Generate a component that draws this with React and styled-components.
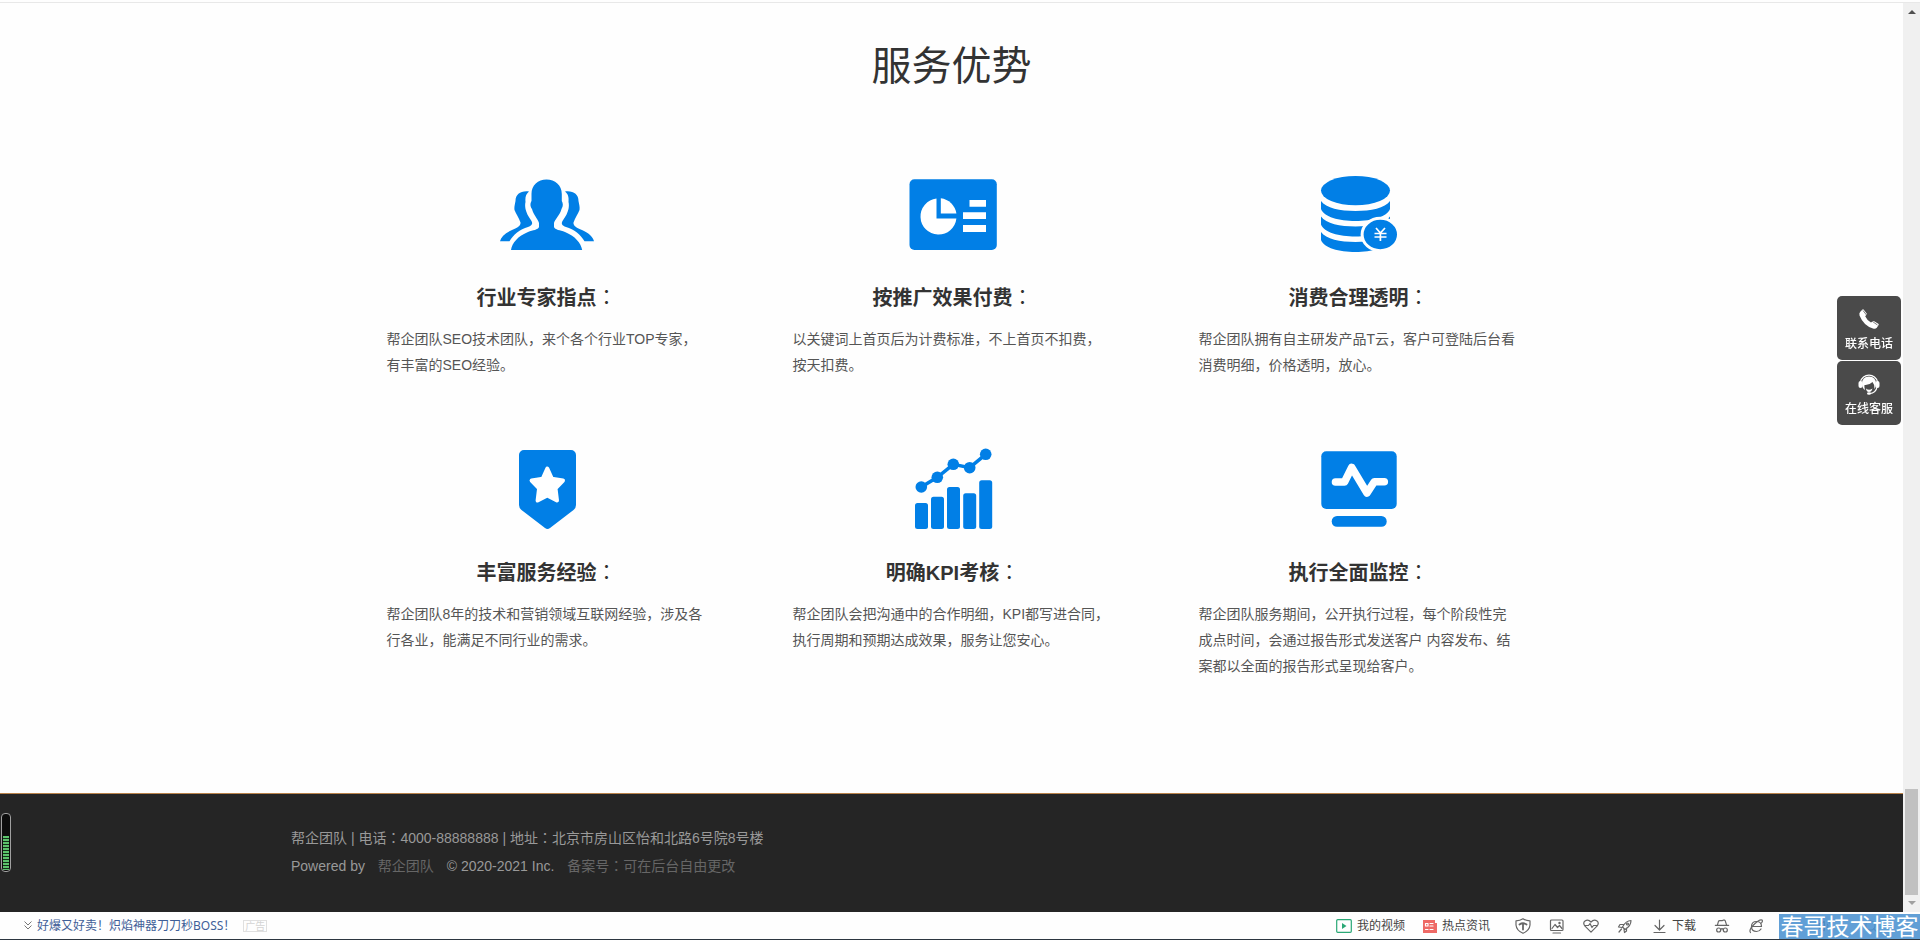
import React from 'react';
import styled, { createGlobalStyle } from 'styled-components';
import { Volume2, Search, HatGlasses } from 'lucide-react';

const BLUE = '#017fe6';

const GlobalStyle = createGlobalStyle`
  * { box-sizing: border-box; }
  body {
    margin: 0;
    background: #fefefe;
    color: #333;
    font-family: "Liberation Sans", "Noto Sans CJK SC", sans-serif;
    font-size: 14px;
  }
  h2, h3, p { margin: 0; }
  a { text-decoration: none; }
`;

const Shell = styled.div`
  display: flex;
  flex-direction: column;
  min-height: 100vh;
`;

const Viewport = styled.div`
  display: flex;
  flex: 1;
  margin-top: 2px;
  border-top: 1px solid #e8e8e8;
`;

const Page = styled.main`
  display: flex;
  flex: 1;
  flex-direction: column;
`;

const Advantages = styled.section`
  flex: 1;
  padding: 41px 20px 112px;
`;

const SectionTitle = styled.h2`
  margin-bottom: 76px;
  font-size: 40px;
  font-weight: 400;
  line-height: 44px;
  text-align: center;
`;

const CardGrid = styled.div`
  display: grid;
  grid-template-columns: repeat(3, 1fr);
  row-gap: 61px;
  max-width: 1218px;
  margin: 0 auto;
`;

const Card = styled.article`
  padding: 0 42px 0 44px;
`;

const CardIcon = styled.svg`
  display: block;
  width: 100px;
  height: 100px;
  margin: 0 auto 20px;
  fill: ${BLUE};
`;

const CardTitle = styled.h3`
  margin-bottom: 14px;
  font-size: 20px;
  font-weight: 700;
  line-height: 28px;
  text-align: center;
`;

// full-width colon sits in the middle of its cell
const Colon = styled.span`
  font-family: "Noto Sans CJK JP", sans-serif;
  font-weight: 400;
  line-height: 1;
`;

const CardText = styled.p`
  color: #555;
  line-height: 26px;
`;

const Footer = styled.footer`
  padding: 30px 20px 32px;
  border-top: 1px solid #b9824a;
  background: #252525;
  color: #999;
`;

const FooterInner = styled.div`
  max-width: 1321px;
  margin: 0 auto;
  line-height: 28px;
`;

const FooterLink = styled.a`
  margin: 0 9px;
  color: #666;
`;

const ScrollTrack = styled.div`
  display: flex;
  flex-direction: column;
  align-items: center;
  width: 17px;
  padding: 7px 0 7px;
  background: #f0f0f0;
`;

const ScrollThumb = styled.div`
  width: 13px;
  height: 106px;
  margin-top: auto;
  margin-bottom: 6px;
  background: #c1c1c1;
`;

const Arrow = styled.svg`
  width: 8px;
  height: 4px;
  fill: ${p => p.$color};
`;

const SideBar = styled.aside`
  position: fixed;
  top: 296px;
  right: 19px;
  display: flex;
  flex-direction: column;
  gap: 1px;
`;

const SideButton = styled.button`
  display: flex;
  flex-direction: column;
  align-items: center;
  gap: 4px;
  width: 64px;
  height: 64px;
  padding: 12px 0 0;
  border: 0;
  border-radius: 5px;
  background: #4a4a4a;
  color: #fff;
  font: 500 12px/18px "Noto Sans CJK SC", sans-serif;

  svg {
    width: 22px;
    height: 22px;
  }
`;

const Gauge = styled.div`
  position: fixed;
  left: 1px;
  bottom: 68px;
  display: flex;
  align-items: flex-end;
  width: 10px;
  height: 59px;
  padding: 1px;
  border: 1px solid #a0a0a0;
  border-radius: 4px;
  background: #0c0c0c;
`;

const GaugeFill = styled.div`
  width: 100%;
  height: 34px;
  background: repeating-linear-gradient(#5cc46c 0 2px, #14301a 2px 3px);
`;

const StatusBar = styled.div`
  position: relative;
  display: flex;
  align-items: center;
  height: 28px;
  padding-left: 24px;
  border-bottom: 1px solid #2c3640;
  background: #fefefe;
  font: 12px/18px "Noto Sans", "Noto Sans CJK SC", sans-serif;
`;

const News = styled.a`
  display: flex;
  align-items: center;
  gap: 5px;
  color: #3f5f98;
`;

const AdTag = styled.span`
  margin-left: 8px;
  padding: 0 1px;
  border: 1px solid #e0e0e0;
  color: #d4d4d4;
  font-size: 10px;
  line-height: 10px;
`;

const Tools = styled.div`
  display: flex;
  align-items: center;
  gap: 18px;
  margin-left: ${p => (p.$first ? 'auto' : '25px')};
`;

const Tool = styled.button`
  display: flex;
  align-items: center;
  gap: 5px;
  padding: 0;
  border: 0;
  background: none;
  color: #444;
  font: inherit;
`;

const ToolIcon = styled.svg`
  width: ${p => p.$w || 16}px;
  height: 16px;
  fill: none;
  stroke: #666;
  stroke-width: 1.2;
  stroke-linecap: round;
  stroke-linejoin: round;
`;

const ZoomInfo = styled.div`
  display: flex;
  align-items: center;
  gap: 32px;
  width: 156px;
  padding-left: 54px;
  color: #444;
`;

const Watermark = styled.div`
  position: absolute;
  right: 0;
  bottom: 0;
  width: 141px;
  height: 25px;
  background: rgba(80, 149, 209, 0.9);
  color: #fff;
  font-size: 23px;
  line-height: 25px;
  text-align: center;
`;

const ExpertsIcon = () => (
  <CardIcon viewBox="0 0 100 100">
    <path d="M49.5 15.5C58 15.5 64.8 21 64.8 30V37C66 39 66.5 42 64.5 45C63 51 58 55 57 59V63C58 66 63 66 68 68C78 72 84 79 85.2 86H14C15 79 21 72 31 68C36 66 41 66 42 63V59C41 55 36.5 51 35 45C32.8 42 33.3 39 34.5 37V30C34.5 21 41 15.5 49.5 15.5Z" />
    <path id="mate" d="M32 27.500C24 26.500 18.500 30 18.500 37C18 40 17 43 17.500 46C19 50 22 54 23.500 58.500C24 62 20 64 15 66C8 69 4 73 3 77.300H12.500C16 71 23 65 31 63C35 61.500 36 60 34.500 57C31 52 29.500 49 28.500 45C28 42 28 40 28.500 38C28 33 29 30 32 27.500Z" />
    <use href="#mate" transform="translate(100 0) scale(-1 1)" />
  </CardIcon>
);

const ReportIcon = () => (
  <CardIcon viewBox="0 0 100 100">
    <rect x="6.5" y="15.3" width="87.3" height="70.7" rx="5" />
    <g fill="#fff">
      <path d="M33.5 34.6A18 18 0 1 0 53.4 54.5H33.5Z" />
      <path d="M37.8 34.2A18 18 0 0 1 53.4 49.5H37.8Z" />
      <path d="M66.5 36H83V42.7H66.5ZM60 48.3H83V55H60ZM60 61H83V68H60Z" />
    </g>
  </CardIcon>
);

const CoinsIcon = () => (
  <CardIcon viewBox="0 0 100 100">
    <ellipse cx="46.5" cy="26.6" rx="34.5" ry="14.7" />
    {[0, 15.5, 31].map(dy => (
      <path
        key={dy}
        transform={`translate(0 ${dy})`}
        d="M12 37C17 44 31 47 46.5 47S76 44 81 37V45C78 53 63 57 46.5 57S15 53 12 45Z"
      />
    ))}
    <path d="M74 64H90V98H74Z" fill="#fefefe" />
    <ellipse cx="71.3" cy="70.5" rx="18.2" ry="16.2" stroke="#fefefe" strokeWidth="3" />
    <path d="M67 64L71.4 69L76 64M71.4 69V77M65.5 69.5H77.5M65.5 73H77.5" fill="none" stroke="#fff" strokeWidth="1.7" />
  </CardIcon>
);

const BadgeIcon = () => (
  <CardIcon viewBox="0 0 100 100">
    <path d="M27 11H74A5 5 0 0 1 79 16V66Q79 69 76.5 71L53 89Q50.5 91 48 89L24.5 71Q22 69 22 66V16A5 5 0 0 1 27 11Z" />
    <path
      d="M50.3 29.5L54.8 39.6L66 41.5L58.500 49.300L60 61.5L50.3 56.500L40.6 61.5L42.100 49.300L34.6 41.5L45.8 39.6Z"
      fill="#fff"
      stroke="#fff"
      strokeWidth="4"
      strokeLinejoin="round"
    />
  </CardIcon>
);

const ChartIcon = () => (
  <CardIcon viewBox="0 0 100 100">
    <rect x="12" y="64" width="13" height="26" rx="2.5" />
    <rect x="28" y="57.7" width="13" height="32.3" rx="2.5" />
    <rect x="44" y="48" width="13" height="42" rx="2.5" />
    <rect x="60.2" y="54.3" width="13" height="35.7" rx="2.5" />
    <rect x="76.2" y="41.3" width="13" height="48.7" rx="2.5" />
    <path d="M18.3 48L34.3 38.3L50.3 25.3L66.7 28.7L82.7 15.3" fill="none" stroke={BLUE} strokeWidth="3.5" />
    <circle cx="18.3" cy="48" r="5.8" />
    <circle cx="34.3" cy="38.3" r="5.8" />
    <circle cx="50.3" cy="25.3" r="5.8" />
    <circle cx="66.7" cy="28.7" r="5.8" />
    <circle cx="82.7" cy="15.3" r="5.8" />
  </CardIcon>
);

const MonitorIcon = () => (
  <CardIcon viewBox="0 0 100 100">
    <rect x="12.3" y="12.3" width="75.4" height="57.7" rx="5" />
    <rect x="22.7" y="77" width="55" height="10.7" rx="5.3" />
    <path
      d="M26.5 43H35.5L42.7 28.5L58 54L65.3 42.7H75.3"
      fill="none"
      stroke="#fff"
      strokeWidth="7.6"
      strokeLinecap="round"
      strokeLinejoin="round"
    />
  </CardIcon>
);

const cards = [
  { title: '行业专家指点', Icon: ExpertsIcon, text: '帮企团队SEO技术团队，来个各个行业TOP专家，有丰富的SEO经验。' },
  { title: '按推广效果付费', Icon: ReportIcon, text: '以关键词上首页后为计费标准，不上首页不扣费，按天扣费。' },
  { title: '消费合理透明', Icon: CoinsIcon, text: '帮企团队拥有自主研发产品T云，客户可登陆后台看消费明细，价格透明，放心。' },
  { title: '丰富服务经验', Icon: BadgeIcon, text: '帮企团队8年的技术和营销领域互联网经验，涉及各行各业，能满足不同行业的需求。' },
  { title: '明确KPI考核', Icon: ChartIcon, text: '帮企团队会把沟通中的合作明细，KPI都写进合同，执行周期和预期达成效果，服务让您安心。' },
  { title: '执行全面监控', Icon: MonitorIcon, text: '帮企团队服务期间，公开执行过程，每个阶段性完成点时间，会通过报告形式发送客户 内容发布、结案都以全面的报告形式呈现给客户。' },
];

function SideTools() {
  return (
    <SideBar>
      <SideButton>
        <svg viewBox="0 0 22 22" fill="#fff">
          <path d="M2.5 3.5L4.5 1.5Q5.2 1 5.8 1.7L8.7 5.5Q9.1 6.2 8.5 6.8L7.2 8.2Q8.7 11.8 13 14.5L14.8 13.2Q15.5 12.7 16.2 13.2L20.3 15.7Q21.2 16.3 20.6 17.1L18.8 19.8Q17.5 21.3 15 20.6Q5.5 17.5 1.5 7.5Q.8 5 2.5 3.5Z" />
          <path d="M5 2.500L8.500 7M14.500 13.500L19.500 17" stroke="#4a4a4a" strokeWidth=".7" />
        </svg>
        联系电话
      </SideButton>
      <SideButton>
        <svg viewBox="0 0 22 22" fill="#fff">
          <path d="M2.5 9A8.7 8.7 0 0 1 19.5 9" fill="none" stroke="#fff" strokeWidth="1.3" />
          <rect x="0.5" y="8" width="4" height="7" rx="2" />
          <rect x="17.5" y="8" width="4" height="7" rx="2" />
          <path d="M4 11Q4 3.5 11 3.5T18 11Q18 14 16.5 16Q17 12 14.5 9Q11 12.5 6.5 12Q6 14 7 17Q4 15 4 11Z" />
          <path d="M8 15.5Q11 18 14.5 15.5Q13.5 19 11 19T8 15.5Z" />
          <path d="M19 14Q18 20 11.5 20.7" fill="none" stroke="#fff" strokeWidth="1.3" />
          <ellipse cx="11" cy="20.5" rx="2" ry="1.2" />
        </svg>
        在线客服
      </SideButton>
    </SideBar>
  );
}

function BrowserBar() {
  return (
    <StatusBar>
      <News href="#">
        <svg width="8" height="9" viewBox="0 0 8 9" fill="none" stroke="#777">
          <path d="M.5 .5L4 4L7.5 .5M.5 4.5L4 8L7.5 4.5" />
        </svg>
        好爆又好卖！炽焰神器刀刀秒BOSS！
      </News>
      <AdTag>广告</AdTag>
      <Tools $first>
        <Tool>
          <ToolIcon viewBox="0 0 16 16">
            <rect x=".7" y="1.7" width="14.6" height="12.6" rx="1" stroke="#2aa876" />
            <path d="M6 5V11L10.5 8Z" fill="#2aa876" stroke="none" />
          </ToolIcon>
          我的视频
        </Tool>
        <Tool>
          <ToolIcon $w={14} viewBox="0 0 14 16">
            <path d="M0 2H12V5H14V15H0Z" fill="#ee6a66" stroke="none" />
            <path d="M2.500 5.500H5V8H2.500ZM7 5.500H10M7 8H10M2.500 11.500H5M7 11.500H10" stroke="#fff" />
          </ToolIcon>
          热点资讯
        </Tool>
      </Tools>
      <Tools>
        <Tool aria-label="安全">
          <ToolIcon viewBox="0 0 16 16">
            <path d="M8 .8Q11 2.8 15 2.8V7Q14.5 12.5 8 15.3Q1.5 12.5 1 7V2.8Q5 2.8 8 .8Z" />
            <path d="M4.5 6.5Q8 4 11.5 6.5M8 6V11.5" strokeWidth="1.8" />
          </ToolIcon>
        </Tool>
        <Tool aria-label="图片">
          <ToolIcon viewBox="0 0 16 16">
            <rect x="1.5" y="2" width="12.5" height="10.5" rx="1" />
            <path d="M3 10.5L6 6.5L8.5 9.5L10.5 7.5L13 10.5M4 15H11.5" />
            <circle cx="10.5" cy="5" r=".6" />
          </ToolIcon>
        </Tool>
        <Tool aria-label="健康">
          <ToolIcon viewBox="0 0 16 16">
            <path d="M8 14.2L2 8.2Q-.5 5 2 3Q5 .8 8 4Q11 .8 14 3Q16.5 5 14 8.2Z" />
            <path d="M2 7.5H5.5L7 5.5L9 9.5L10.5 7.5H14" />
          </ToolIcon>
        </Tool>
        <Tool aria-label="加速">
          <ToolIcon viewBox="0 0 16 16">
            <path d="M14 2.500Q9 2.500 5.500 9L8 11.500Q14 8 14 2.500ZM6.500 6.500H3L1.500 9L5 9.500M9.500 10L9.500 13L7.500 14.500L7 11.500M4.500 11L2 14" />
            <circle cx="10.500" cy="6" r="1" />
          </ToolIcon>
        </Tool>
        <Tool>
          <ToolIcon viewBox="0 0 16 16">
            <path d="M8.5 2V11.5M4 7.5L8.5 12L13 7.5M3 14.5H14" />
          </ToolIcon>
          下载
        </Tool>
        <Tool aria-label="无痕">
          <HatGlasses size={16} color="#666" strokeWidth={1.8} />
        </Tool>
        <Tool aria-label="浏览器模式">
          <ToolIcon viewBox="0 0 16 16">
            <path d="M3.5 8.5H13.5Q13.5 3.5 8.5 3.5T3.5 8.5T8.5 13.5Q11.5 13.5 13 11" />
            <path d="M2.5 14.5Q.5 12 6 6.5T14 2Q15 3 13.5 5" />
          </ToolIcon>
        </Tool>
      </Tools>
      <ZoomInfo>
        <Volume2 size={14} />
        <Search size={14} />
      </ZoomInfo>
      <Watermark>春哥技术博客</Watermark>
    </StatusBar>
  );
}

export default function App() {
  return (
    <Shell>
      <GlobalStyle />
      <Viewport>
        <Page>
          <Advantages>
            <SectionTitle>服务优势</SectionTitle>
            <CardGrid>
              {cards.map(({ title, Icon, text }) => (
                <Card key={title}>
                  <Icon />
                  <CardTitle>{title}<Colon>：</Colon></CardTitle>
                  <CardText>{text}</CardText>
                </Card>
              ))}
            </CardGrid>
          </Advantages>
          <Footer>
            <FooterInner>
              <p>帮企团队 | 电话<Colon>：</Colon>4000-88888888 | 地址<Colon>：</Colon>北京市房山区怡和北路6号院8号楼</p>
              <p>
                Powered by <FooterLink href="#">帮企团队</FooterLink> © 2020-2021 Inc.{' '}
                <FooterLink href="#">备案号<Colon>：</Colon>可在后台自由更改</FooterLink>
              </p>
            </FooterInner>
          </Footer>
        </Page>
        <ScrollTrack aria-hidden="true">
          <Arrow viewBox="0 0 8 4" $color="#505050"><path d="M0 4L4 0L8 4Z" /></Arrow>
          <ScrollThumb />
          <Arrow viewBox="0 0 8 4" $color="#a0a0a0"><path d="M0 0L4 4L8 0Z" /></Arrow>
        </ScrollTrack>
      </Viewport>
      <BrowserBar />
      <SideTools />
      <Gauge aria-hidden="true"><GaugeFill /></Gauge>
    </Shell>
  );
}
